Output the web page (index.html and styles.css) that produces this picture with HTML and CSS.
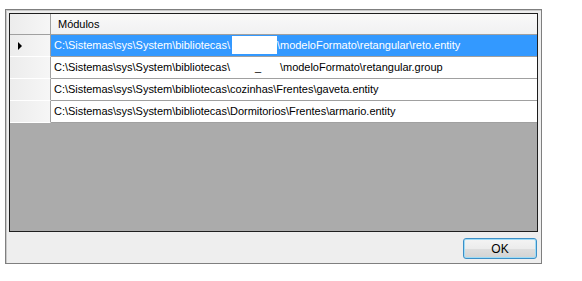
FILE: index.html
```
<!DOCTYPE html>
<html lang="pt">
<head>
    <meta charset="UTF-8">
    <title>Módulos</title>
    <link rel="stylesheet" href="styles.css">
</head>
<body>
    <div class="dialog">
        <div class="grid">
            <div class="row header">
                <div class="row-head"></div>
                <div class="cell">Módulos</div>
            </div>
            <div class="row selected">
                <div class="row-head"><span class="arrow"></span></div>
                <div class="cell">C:\Sistemas\sys\System\bibliotecas\<span class="hidden-box"></span>\modeloFormato\retangular\reto.entity</div>
            </div>
            <div class="row">
                <div class="row-head"></div>
                <div class="cell">C:\Sistemas\sys\System\bibliotecas\<span class="hidden-gap">_</span>\modeloFormato\retangular.group</div>
            </div>
            <div class="row">
                <div class="row-head"></div>
                <div class="cell">C:\Sistemas\sys\System\bibliotecas\cozinhas\Frentes\gaveta.entity</div>
            </div>
            <div class="row">
                <div class="row-head"></div>
                <div class="cell">C:\Sistemas\sys\System\bibliotecas\Dormitorios\Frentes\armario.entity</div>
            </div>
            <div class="empty"></div>
        </div>
        <div class="footer">
            <button class="ok">OK</button>
        </div>
    </div>
</body>
</html>
```

FILE: styles.css
```
body {
    margin: 0;
    background-color: #fff;
    font-family: "Liberation Sans", Arial, sans-serif;
    font-size: 11px;
}
.dialog {
    box-sizing: border-box;
    width: 537px;
    height: 255px;
    margin: 9px 0 0 5px;
    padding: 3px 3px 0 3px;
    border: 1px solid #7f7f7f;
    box-shadow: inset 1px 1px 0 #c8c8c8;
    background-color: #eeeeee;
    display: flex;
    flex-direction: column;
}
.grid {
    box-sizing: border-box;
    width: 529px;
    height: 219px;
    border: 1px solid #1e1e1e;
    display: flex;
    flex-direction: column;
    background-color: #ababab;
}
.row {
    display: flex;
    height: 22px;
    flex-shrink: 0;
}
.row-head {
    box-sizing: border-box;
    width: 41px;
    background: linear-gradient(to right, #ececec, #f6f6f6);
    border-bottom: 1px solid #fff;
    border-right: 1px solid #a0a0a0;
    position: relative;
}
.cell {
    box-sizing: border-box;
    flex: 1;
    padding: 0 0 0 3px;
    background-color: #fff;
    border-bottom: 1px solid #a0a0a0;
    line-height: 21px;
    white-space: nowrap;
    color: #000;
    letter-spacing: -0.02px;
}
.header {
    height: 21px;
}
.header .row-head {
    background-color: #f0f0f0;
    border-bottom: 1px solid #a0a0a0;
}
.header .cell {
    background: linear-gradient(to bottom, #f9f9f9, #f1f1f2);
    padding-left: 7px;
    line-height: 20px;
}
.selected .cell {
    background-color: #3399ff;
    color: #fff;
}
.arrow {
    position: absolute;
    left: 8px;
    top: 7px;
    border-top: 4px solid transparent;
    border-bottom: 4px solid transparent;
    border-left: 4px solid #000;
}
.hidden-box {
    display: inline-block;
    width: 45px;
    height: 18px;
    vertical-align: -5px;
    background-color: #fff;
    margin-left: 2px;
}
.hidden-gap {
    display: inline-block;
    width: 50px;
    padding-left: 25px;
    box-sizing: border-box;
}
.empty {
    flex: 1;
}
.footer {
    display: flex;
    justify-content: flex-end;
    padding: 6px 1px 0 0;
}
.ok {
    width: 74px;
    height: 21px;
    border: 1px solid #3c8fc7;
    border-radius: 3px;
    box-shadow: inset 0 0 0 1px #9fdcf6;
    background: linear-gradient(to bottom, #f4f4f4 0%, #ececec 50%, #dedede 51%, #d3d3d3 100%);
    font-family: "Liberation Sans", Arial, sans-serif;
    font-size: 12px;
    color: #000;
    padding: 0;
}
```
